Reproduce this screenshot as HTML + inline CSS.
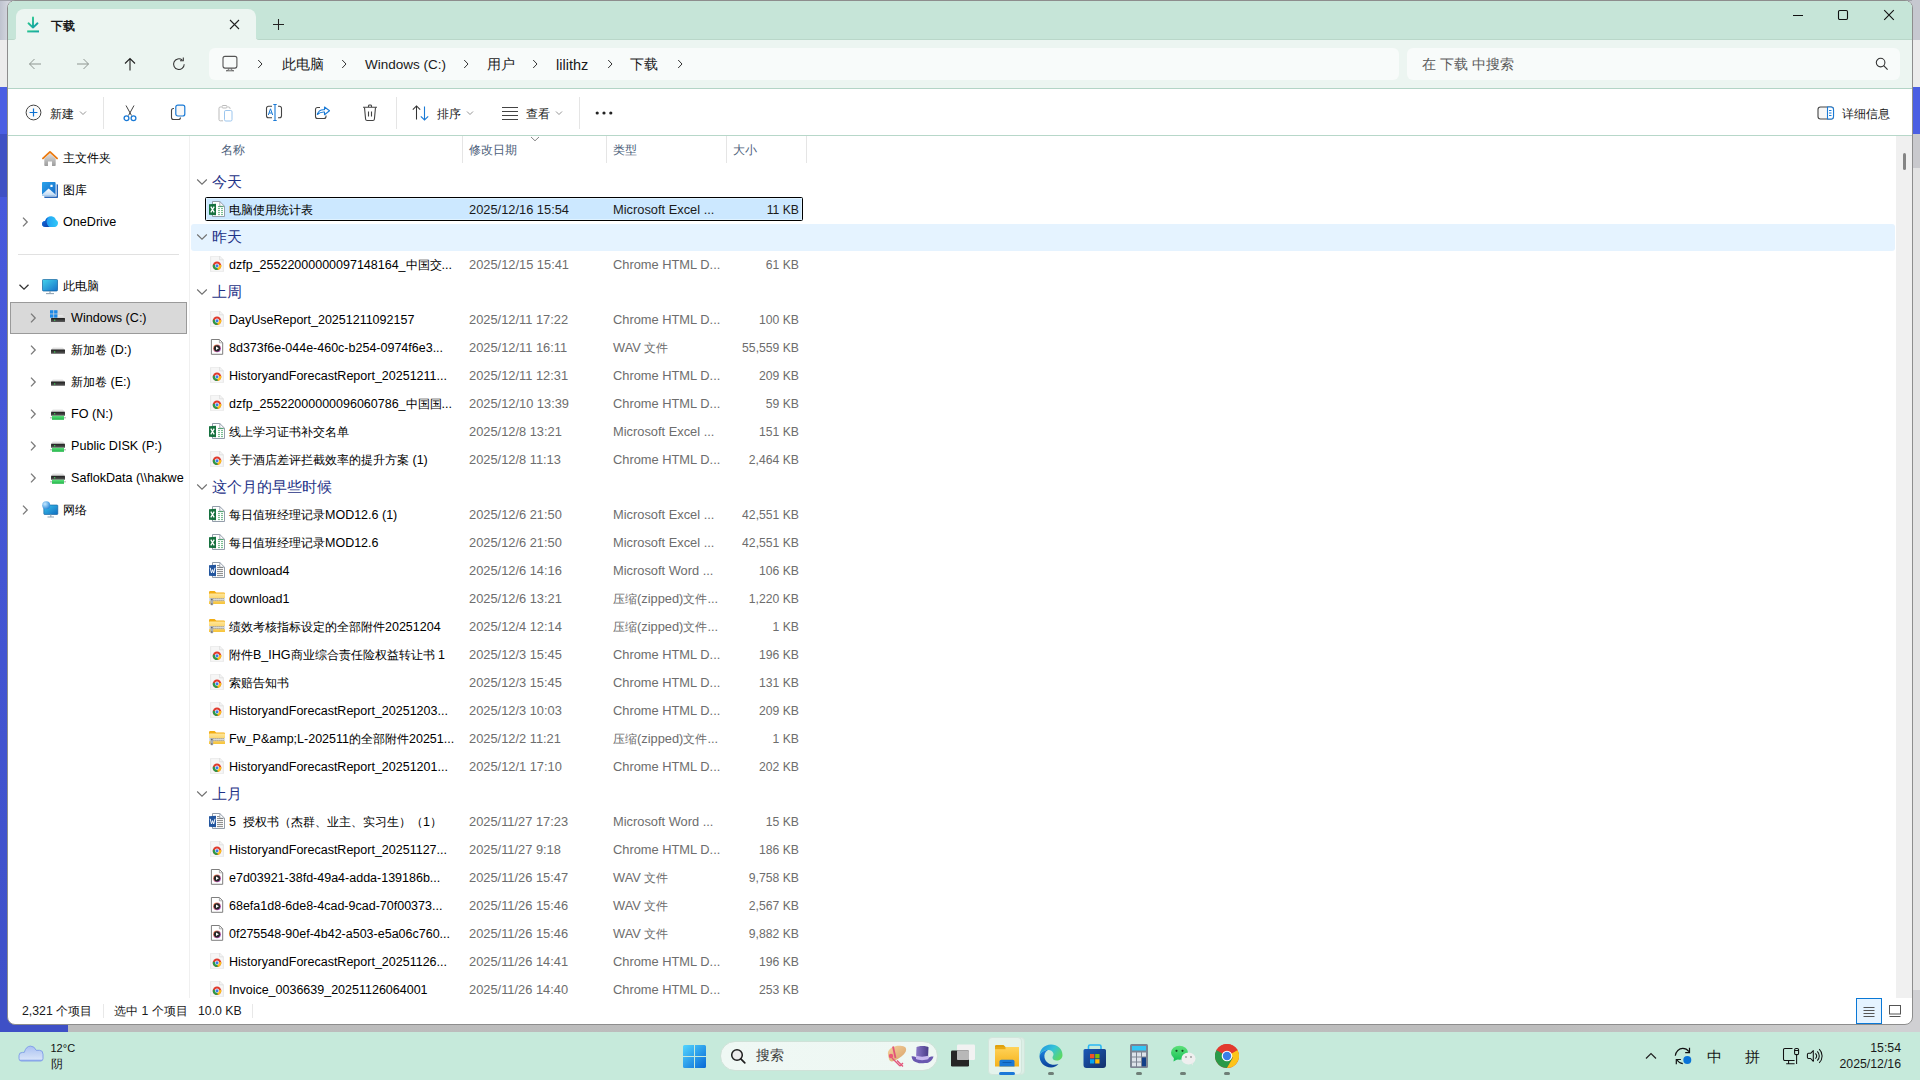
<!DOCTYPE html><html><head><meta charset="utf-8"><style>
*{margin:0;padding:0;box-sizing:border-box}
html,body{width:1920px;height:1080px;overflow:hidden;background:#4a5ad8;font-family:"Liberation Sans",sans-serif}
.t{position:absolute;white-space:pre;line-height:20px}
i{font-style:normal;line-height:0}
</style></head><body><div style="position:absolute;left:0px;top:0px;width:1920px;height:1080px;background:#e6e6e6"></div><div style="position:absolute;left:0px;top:0px;width:24px;height:40px;background:linear-gradient(90deg,#bfc3cf,#d3d6de 8px,#c9ccd6)"></div><div style="position:absolute;left:1896px;top:0px;width:24px;height:40px;background:#c6c8d0"></div><div style="position:absolute;left:0px;top:0px;width:1920px;height:1px;background:#a0a2aa"></div><div style="position:absolute;left:0px;top:40px;width:8px;height:47px;background:#ececec"></div><div style="position:absolute;left:0px;top:87px;width:8px;height:947px;background:linear-gradient(180deg,#4b5fe3 0px,#4b5fe3 47px,#3f51c4 47px,#3f51c4 110px,#4759dc 110px,#3e50c8 100%)"></div><div style="position:absolute;left:0px;top:1024px;width:68px;height:8px;background:#3e50c6"></div><div style="position:absolute;left:68px;top:1024px;width:1852px;height:8px;background:linear-gradient(90deg,#bcbcbc,#bdbdbd 80%,#d2d2d2)"></div><div style="position:absolute;left:1912px;top:0px;width:8px;height:40px;background:#c6c8d0"></div><div style="position:absolute;left:1912px;top:40px;width:8px;height:47px;background:#ececec"></div><div style="position:absolute;left:1912px;top:87px;width:8px;height:47px;background:#4b5fe3"></div><div style="position:absolute;left:1912px;top:134px;width:8px;height:34px;background:#c9c9cd"></div><div style="position:absolute;left:1912px;top:168px;width:8px;height:856px;background:#e3e3e3"></div><div style="position:absolute;left:0px;top:990px;width:24px;height:42px;background:#3e50c6"></div><div style="position:absolute;left:1896px;top:990px;width:24px;height:42px;background:#d0d0d3"></div><div style="position:absolute;left:7px;top:0px;width:1906px;height:1025px;background:#fff;border:1px solid #8d8d8d;border-radius:8px;overflow:hidden"></div><div style="position:absolute;left:8px;top:1px;width:1904px;height:87px;background:#ecf5f1;border-radius:7px 7px 0 0"></div><div style="position:absolute;left:8px;top:1px;width:1904px;height:20px;background:#c6e5d8;border-radius:7px 7px 0 0"></div><div style="position:absolute;left:8px;top:1px;width:8px;height:39px;background:#c6e5d8;border-radius:7px 0 3px 0;border-bottom:1px solid #bad8ca"></div><div style="position:absolute;left:256px;top:1px;width:1656px;height:39px;background:#c6e5d8;border-radius:0 7px 0 3px;border-bottom:1px solid #b9d7c9"></div><div style="position:absolute;left:8px;top:88px;width:1904px;height:1px;background:#b3d4c6"></div><div style="position:absolute;left:8px;top:135px;width:1904px;height:1px;background:#b7d7c9"></div><div style="position:absolute;left:16px;top:9px;width:240px;height:31px;background:#ecf5f1;border-radius:8px 8px 0 0"></div><svg style="position:absolute;left:25px;top:16px" width="16" height="18" viewBox="0 0 16 18"><defs><linearGradient id="dg" x1="0" y1="0" x2="1" y2="1"><stop offset="0" stop-color="#2fd08a"/><stop offset="1" stop-color="#0e9aa8"/></linearGradient></defs><path d="M8 1.5V11.5M3.5 7.3L8 11.6L12.5 7.3" stroke="url(#dg)" stroke-width="1.9" fill="none" stroke-linecap="round" stroke-linejoin="round"/><rect x="2.2" y="14.4" width="11.8" height="2" fill="url(#dg)"/></svg><div class="t" style="left:51px;top:15.84px;font-size:12px;color:#1a1a1a;font-weight:bold"><i style="font-size:12px">下载</i></div><svg style="position:absolute;left:229px;top:19px" width="11" height="11" viewBox="0 0 11 11"><path d="M1 1L10 10M10 1L1 10" stroke="#222" stroke-width="1.1"/></svg><svg style="position:absolute;left:273px;top:19px" width="11" height="11" viewBox="0 0 11 11"><path d="M5.5 0V11M0 5.5H11" stroke="#222" stroke-width="1.05"/></svg><div style="position:absolute;left:1793px;top:15px;width:10px;height:1px;background:#111"></div><svg style="position:absolute;left:1837px;top:9px" width="12" height="12" viewBox="0 0 12 12"><rect x="1.5" y="1.5" width="9" height="9" rx="1.2" stroke="#111" stroke-width="1.1" fill="none"/></svg><svg style="position:absolute;left:1883px;top:9px" width="12" height="12" viewBox="0 0 12 12"><path d="M1.2 1.2L10.8 10.8M10.8 1.2L1.2 10.8" stroke="#111" stroke-width="1.1"/></svg><svg style="position:absolute;left:27px;top:56px" width="16" height="16" viewBox="0 0 16 16"><path d="M14 8H2.5M7.5 3L2.5 8L7.5 13" stroke="#8d9590" stroke-width="1" fill="none"/></svg><svg style="position:absolute;left:75px;top:56px" width="16" height="16" viewBox="0 0 16 16"><path d="M2 8H13.5M8.5 3L13.5 8L8.5 13" stroke="#8d9590" stroke-width="1" fill="none"/></svg><svg style="position:absolute;left:122px;top:56px" width="16" height="16" viewBox="0 0 16 16"><path d="M8 14.5V2.5M3 7.5L8 2.5L13 7.5" stroke="#222" stroke-width="1.1" fill="none"/></svg><svg style="position:absolute;left:171px;top:56px" width="16" height="16" viewBox="0 0 16 16"><path d="M13.2 8.2A5.3 5.3 0 1 1 11.2 4" stroke="#333" stroke-width="1.05" fill="none"/><path d="M12.3 1.5V4.8H9" stroke="#333" stroke-width="1.05" fill="none"/></svg><div style="position:absolute;left:209px;top:48px;width:1190px;height:32px;background:#f8fbfa;border-radius:6px"></div><svg style="position:absolute;left:221px;top:55px" width="18" height="18" viewBox="0 0 18 18"><rect x="2" y="1.4" width="13.9" height="11.7" rx="2" stroke="#555" stroke-width="1.1" fill="none"/><path d="M7.8 13.2V14.8L5.2 15.8H12.8L10.2 14.8V13.2" stroke="#666" stroke-width="1" fill="none" stroke-linejoin="round"/></svg><svg style="position:absolute;left:256px;top:58px" width="8" height="12" viewBox="0 0 8 12"><path d="M2.2 2L6 6L2.2 10" stroke="#333" stroke-width="1.0" fill="none"/></svg><svg style="position:absolute;left:340px;top:58px" width="8" height="12" viewBox="0 0 8 12"><path d="M2.2 2L6 6L2.2 10" stroke="#333" stroke-width="1.0" fill="none"/></svg><svg style="position:absolute;left:462px;top:58px" width="8" height="12" viewBox="0 0 8 12"><path d="M2.2 2L6 6L2.2 10" stroke="#333" stroke-width="1.0" fill="none"/></svg><svg style="position:absolute;left:531px;top:58px" width="8" height="12" viewBox="0 0 8 12"><path d="M2.2 2L6 6L2.2 10" stroke="#333" stroke-width="1.0" fill="none"/></svg><svg style="position:absolute;left:606px;top:58px" width="8" height="12" viewBox="0 0 8 12"><path d="M2.2 2L6 6L2.2 10" stroke="#333" stroke-width="1.0" fill="none"/></svg><svg style="position:absolute;left:676px;top:58px" width="8" height="12" viewBox="0 0 8 12"><path d="M2.2 2L6 6L2.2 10" stroke="#333" stroke-width="1.0" fill="none"/></svg><div class="t" style="left:282px;top:55.32px;font-size:13.5px;color:#1a1a1a;"><i style="font-size:14px">此电脑</i></div><div class="t" style="left:365px;top:55.32px;font-size:13.5px;color:#1a1a1a;">Windows (C:)</div><div class="t" style="left:487px;top:55.32px;font-size:13.5px;color:#1a1a1a;"><i style="font-size:14px">用户</i></div><div class="t" style="left:556px;top:54.980000000000004px;font-size:14.5px;color:#1a1a1a;">lilithz</div><div class="t" style="left:630px;top:55.32px;font-size:13.5px;color:#1a1a1a;"><i style="font-size:14px">下载</i></div><div style="position:absolute;left:1407px;top:48px;width:493px;height:32px;background:#f8fbfa;border-radius:6px"></div><div class="t" style="left:1422px;top:55.32px;font-size:13.5px;color:#5c5c5c;"><i style="font-size:14px">在</i> <i style="font-size:14px">下载</i> <i style="font-size:14px">中搜索</i></div><svg style="position:absolute;left:1875px;top:57px" width="14" height="14" viewBox="0 0 14 14"><circle cx="5.6" cy="5.6" r="4.3" stroke="#333" stroke-width="1.1" fill="none"/><path d="M8.7 8.7L12.6 12.6" stroke="#333" stroke-width="1.2"/></svg><svg style="position:absolute;left:25px;top:104px" width="17" height="17" viewBox="0 0 17 17"><circle cx="8.5" cy="8.5" r="7.4" stroke="#444" stroke-width="1" fill="#fafafa"/><path d="M8.5 4.6V12.4M4.6 8.5H12.4" stroke="#0a6fd0" stroke-width="1.2"/></svg><div class="t" style="left:50px;top:103.84px;font-size:12px;color:#1a1a1a;"><i style="font-size:12px">新建</i></div><svg style="position:absolute;left:79px;top:110px" width="8" height="6" viewBox="0 0 8 6"><path d="M1 1.5L4 4.5L7 1.5" stroke="#888" stroke-width="0.9" fill="none"/></svg><div style="position:absolute;left:103px;top:97px;width:1px;height:32px;background:#e5e5e5"></div><svg style="position:absolute;left:121px;top:104px" width="18" height="18" viewBox="0 0 18 18"><path d="M5 1.5L10.5 11.5M13 1.5L7.5 11.5" stroke="#444" stroke-width="1" fill="none"/><circle cx="5.5" cy="14.2" r="2.4" stroke="#1a7ad6" stroke-width="1.3" fill="none"/><circle cx="12.5" cy="14.2" r="2.4" stroke="#1a7ad6" stroke-width="1.3" fill="none"/></svg><svg style="position:absolute;left:170px;top:104px" width="17" height="17" viewBox="0 0 17 17"><path d="M4 4.5H3.5A2 2 0 0 0 1.5 6.5V13.5A2 2 0 0 0 3.5 15.5H8.5A2 2 0 0 0 10.5 13.5" stroke="#444" stroke-width="1.1" fill="none"/><rect x="5.8" y="1.2" width="9" height="10.8" rx="2" stroke="#1a7ad6" stroke-width="1.2" fill="#f8f8f8"/></svg><svg style="position:absolute;left:217px;top:104px" width="18" height="18" viewBox="0 0 18 18"><path d="M4.5 3H3.2A1.3 1.3 0 0 0 2 4.3V15.5A1.3 1.3 0 0 0 3.3 16.8H6M10.5 3H11.8A1.3 1.3 0 0 1 13 4.3V5" stroke="#bbb" stroke-width="1" fill="none"/><rect x="5" y="1.5" width="5" height="2.5" rx="1" stroke="#bbb" stroke-width="1" fill="none"/><rect x="7.5" y="6.5" width="7.5" height="10.5" rx="1.3" stroke="#9cc6ee" stroke-width="1" fill="none"/></svg><svg style="position:absolute;left:265px;top:103px" width="18" height="19" viewBox="0 0 18 19"><path d="M7 3.2H3.5A2 2 0 0 0 1.5 5.2V12.8A2 2 0 0 0 3.5 14.8H7M13 3.2H14.5A2 2 0 0 1 16.5 5.2V12.8A2 2 0 0 1 14.5 14.8H13" stroke="#444" stroke-width="1.1" fill="none"/><path d="M10 1.5V17.5M8.3 1.5H11.7M8.3 17.5H11.7" stroke="#1a7ad6" stroke-width="1.1"/><path d="M3.3 12L5.5 5.8L7.7 12M4.1 10H6.9" stroke="#1a7ad6" stroke-width="1" fill="none"/></svg><svg style="position:absolute;left:314px;top:104px" width="18" height="18" viewBox="0 0 18 18"><path d="M6 3.5H3.5A2 2 0 0 0 1.5 5.5V12.5A2 2 0 0 0 3.5 14.5H10A2 2 0 0 0 12 12.5V11.5" stroke="#444" stroke-width="1.1" fill="none"/><path d="M3.3 10.5C4.5 6.5 8 5.5 10.5 5.8V3L15.5 6.8L10.5 10.7V8C8 7.8 5.5 8.6 3.3 10.5Z" stroke="#1a7ad6" stroke-width="1.1" fill="none" stroke-linejoin="round"/></svg><svg style="position:absolute;left:362px;top:104px" width="16" height="18" viewBox="0 0 16 18"><path d="M1 3.2H15M6.5 3V1.8A1 1 0 0 1 7.5 1H8.5A1 1 0 0 1 9.5 1.8V3" stroke="#444" stroke-width="1.1" fill="none"/><path d="M2.5 3.5L3.6 15.2A1.5 1.5 0 0 0 5.1 16.5H10.9A1.5 1.5 0 0 0 12.4 15.2L13.5 3.5" stroke="#444" stroke-width="1.1" fill="none"/><path d="M6.5 7.5V12.5M9.5 7.5V12.5" stroke="#444" stroke-width="1.1"/></svg><div style="position:absolute;left:396px;top:97px;width:1px;height:32px;background:#e5e5e5"></div><svg style="position:absolute;left:411px;top:104px" width="20" height="18" viewBox="0 0 20 18"><path d="M5.5 15.5V2M1.8 5.7L5.5 2L9.2 5.7" stroke="#333" stroke-width="1.05" fill="none"/><path d="M13.5 2.5V16M9.8 12.3L13.5 16L17.2 12.3" stroke="#1a7ad6" stroke-width="1.1" fill="none"/></svg><div class="t" style="left:437px;top:103.84px;font-size:12px;color:#1a1a1a;"><i style="font-size:12px">排序</i></div><svg style="position:absolute;left:466px;top:110px" width="8" height="6" viewBox="0 0 8 6"><path d="M1 1.5L4 4.5L7 1.5" stroke="#888" stroke-width="0.9" fill="none"/></svg><svg style="position:absolute;left:501px;top:105px" width="18" height="16" viewBox="0 0 18 16"><path d="M1 2.5H17M1 6.5H17M1 10.5H17M1 14.5H17" stroke="#444" stroke-width="1"/></svg><div class="t" style="left:526px;top:103.84px;font-size:12px;color:#1a1a1a;"><i style="font-size:12px">查看</i></div><svg style="position:absolute;left:555px;top:110px" width="8" height="6" viewBox="0 0 8 6"><path d="M1 1.5L4 4.5L7 1.5" stroke="#888" stroke-width="0.9" fill="none"/></svg><div style="position:absolute;left:579px;top:97px;width:1px;height:32px;background:#e5e5e5"></div><svg style="position:absolute;left:595px;top:110px" width="18" height="6" viewBox="0 0 18 6"><circle cx="2.2" cy="3" r="1.6" fill="#222"/><circle cx="9" cy="3" r="1.6" fill="#222"/><circle cx="15.8" cy="3" r="1.6" fill="#222"/></svg><svg style="position:absolute;left:1817px;top:106px" width="18" height="14" viewBox="0 0 18 14"><rect x="1" y="1" width="15.5" height="12" rx="2.5" stroke="#444" stroke-width="1.1" fill="#f7f7f7"/><path d="M10.5 1H14A2.5 2.5 0 0 1 16.5 3.5V10.5A2.5 2.5 0 0 1 14 13H10.5Z" stroke="#1a7ad6" stroke-width="1.1" fill="#fff"/><path d="M12 4.5H14.5M12 7H14.5M12 9.5H14.5" stroke="#1a7ad6" stroke-width="1"/></svg><div class="t" style="left:1842px;top:103.84px;font-size:12px;color:#1a1a1a;"><i style="font-size:12px">详细信息</i></div><svg style="position:absolute;left:42px;top:150px" width="16" height="16" viewBox="0 0 16 16"><defs><linearGradient id="hg" x1="0" y1="0" x2="0" y2="1"><stop offset="0" stop-color="#dcdcdc"/><stop offset="1" stop-color="#9c9c9c"/></linearGradient></defs><path d="M2.3 8.8L8 3.6L13.7 8.8V15.2A0.8 0.8 0 0 1 12.9 16H10V11.5H6V16H3.1A0.8 0.8 0 0 1 2.3 15.2Z" fill="url(#hg)"/><path d="M1 8.4L8 1.9L15 8.4" stroke="#ea7a10" stroke-width="1.9" fill="none" stroke-linecap="round" stroke-linejoin="round"/></svg><div class="t" style="left:63px;top:148.13px;font-size:12.6px;color:#000;"><i style="font-size:12px">主文件夹</i></div><svg style="position:absolute;left:42px;top:182px" width="16" height="16" viewBox="0 0 16 16"><defs><linearGradient id="gg" x1="0" y1="0" x2="1" y2="1"><stop offset="0" stop-color="#2aa4ec"/><stop offset="1" stop-color="#1467c4"/></linearGradient><linearGradient id="gm" x1="0" y1="0" x2="0" y2="1"><stop offset="0" stop-color="#ffffff"/><stop offset="1" stop-color="#bcd8f4"/></linearGradient></defs><path d="M14.6 2.2H15.2A0.8 0.8 0 0 1 16 3V15.2A0.8 0.8 0 0 1 15.2 16H3A0.8 0.8 0 0 1 2.2 15.2V14.6H14.6Z" fill="#2a66b8"/><rect x="0" y="0" width="13.6" height="13.6" rx="0.9" fill="url(#gg)"/><path d="M0 13.6V12.4L6.6 6.4L13.6 12.4V13.6Z" fill="url(#gm)"/><rect x="8.4" y="2.8" width="2.2" height="2.2" rx="0.3" fill="#fff"/></svg><div class="t" style="left:63px;top:180.13px;font-size:12.6px;color:#000;"><i style="font-size:12px">图库</i></div><svg style="position:absolute;left:21px;top:216px" width="8" height="12" viewBox="0 0 8 12"><path d="M2 1.6L6.2 6L2 10.4" stroke="#7a7a7a" stroke-width="1.3" fill="none"/></svg><svg style="position:absolute;left:42px;top:215px" width="16" height="13" viewBox="0 0 16 13"><defs><linearGradient id="og1" x1="0" y1="0" x2="1" y2="1"><stop offset="0" stop-color="#1a6fe0"/><stop offset="1" stop-color="#0a3fa8"/></linearGradient><linearGradient id="og2" x1="0" y1="0" x2="1" y2="0"><stop offset="0" stop-color="#1c8ff0"/><stop offset="1" stop-color="#30c8f8"/></linearGradient></defs><path d="M3.5 12C1.5 12 0 10.8 0 9C0 7.2 1.5 6 3.2 6C4 3 6.5 1 9.5 1.2C12 1.4 13.5 3 14 5C15.3 5.5 16 6.7 16 8C16 10.2 14.5 12 12.5 12Z" fill="url(#og2)"/><path d="M3.5 12C1.5 12 0 10.8 0 9C0 7.2 1.5 6 3.2 6C3.8 4 5 3 6.2 2.6C4.5 4.5 4.2 7 5.2 9.2C5.8 10.5 6.5 11.4 7.5 12Z" fill="url(#og1)"/></svg><div class="t" style="left:63px;top:212.13px;font-size:12.6px;color:#000;">OneDrive</div><div style="position:absolute;left:18px;top:254px;width:161px;height:1px;background:#e1e1e1"></div><svg style="position:absolute;left:18px;top:282.5px" width="12" height="8" viewBox="0 0 12 8"><path d="M1.5 1.8L6 6.2L10.5 1.8" stroke="#333" stroke-width="1.3" fill="none"/></svg><svg style="position:absolute;left:42px;top:279px" width="16" height="16" viewBox="0 0 16 16"><defs><linearGradient id="pg" x1="0" y1="0" x2="1" y2="1"><stop offset="0" stop-color="#42d4ec"/><stop offset="1" stop-color="#1670c8"/></linearGradient></defs><rect x="0.4" y="0.4" width="15.2" height="11.6" rx="1.2" fill="url(#pg)" stroke="#0c5a98" stroke-width="0.7"/><path d="M8 12V14.3" stroke="#90a4b4" stroke-width="1.2"/><path d="M4 14.6H12" stroke="#90a4b4" stroke-width="1.1"/></svg><div class="t" style="left:63px;top:276.13px;font-size:12.6px;color:#000;"><i style="font-size:12px">此电脑</i></div><div style="position:absolute;left:10px;top:302px;width:177px;height:32px;background:#d9d9d9;border:1px solid #9a9a9a"></div><svg style="position:absolute;left:29px;top:312px" width="8" height="12" viewBox="0 0 8 12"><path d="M2 1.6L6.2 6L2 10.4" stroke="#7a7a7a" stroke-width="1.3" fill="none"/></svg><svg style="position:absolute;left:50px;top:309px" width="16" height="16" viewBox="0 0 16 16"><defs><linearGradient id="dt" x1="0" y1="0" x2="0" y2="1"><stop offset="0" stop-color="#f2f2f2"/><stop offset="1" stop-color="#cfcfcf"/></linearGradient><linearGradient id="db" x1="0" y1="0" x2="0" y2="1"><stop offset="0" stop-color="#1e1e1e"/><stop offset="1" stop-color="#5a5a5a"/></linearGradient><linearGradient id="dgn" x1="0" y1="0" x2="0" y2="1"><stop offset="0" stop-color="#5ae07a"/><stop offset="1" stop-color="#22b448"/></linearGradient></defs><rect x="0" y="1.2" width="3.4" height="3.4" fill="#1e8ae8"/><rect x="4.1" y="1.2" width="3.4" height="3.4" fill="#1e8ae8"/><rect x="0" y="5.3" width="3.4" height="3.4" fill="#1e8ae8"/><rect x="4.1" y="5.3" width="3.4" height="3.4" fill="#1e8ae8"/><path d="M7.8 6.2H12.5L15 9H7.8Z" fill="url(#dt)"/><rect x="1" y="9" width="14" height="3.9" rx="0.5" fill="url(#db)"/><rect x="4" y="10.6" width="1.3" height="1.1" fill="#3fe05a"/></svg><div class="t" style="left:71px;top:308.13px;font-size:12.6px;color:#000;">Windows (C:)</div><svg style="position:absolute;left:29px;top:344px" width="8" height="12" viewBox="0 0 8 12"><path d="M2 1.6L6.2 6L2 10.4" stroke="#7a7a7a" stroke-width="1.3" fill="none"/></svg><svg style="position:absolute;left:50px;top:341px" width="16" height="16" viewBox="0 0 16 16"><defs><linearGradient id="dt" x1="0" y1="0" x2="0" y2="1"><stop offset="0" stop-color="#f2f2f2"/><stop offset="1" stop-color="#cfcfcf"/></linearGradient><linearGradient id="db" x1="0" y1="0" x2="0" y2="1"><stop offset="0" stop-color="#1e1e1e"/><stop offset="1" stop-color="#5a5a5a"/></linearGradient><linearGradient id="dgn" x1="0" y1="0" x2="0" y2="1"><stop offset="0" stop-color="#5ae07a"/><stop offset="1" stop-color="#22b448"/></linearGradient></defs><path d="M3 6.2H12.5L15 8.8H1Z" fill="url(#dt)"/><rect x="1" y="8.6" width="14" height="4.2" rx="0.5" fill="url(#db)"/><rect x="4" y="10.4" width="1.3" height="1.1" fill="#3fe05a"/></svg><div class="t" style="left:71px;top:340.13px;font-size:12.6px;color:#000;"><i style="font-size:12px">新加卷</i> (D:)</div><svg style="position:absolute;left:29px;top:376px" width="8" height="12" viewBox="0 0 8 12"><path d="M2 1.6L6.2 6L2 10.4" stroke="#7a7a7a" stroke-width="1.3" fill="none"/></svg><svg style="position:absolute;left:50px;top:373px" width="16" height="16" viewBox="0 0 16 16"><defs><linearGradient id="dt" x1="0" y1="0" x2="0" y2="1"><stop offset="0" stop-color="#f2f2f2"/><stop offset="1" stop-color="#cfcfcf"/></linearGradient><linearGradient id="db" x1="0" y1="0" x2="0" y2="1"><stop offset="0" stop-color="#1e1e1e"/><stop offset="1" stop-color="#5a5a5a"/></linearGradient><linearGradient id="dgn" x1="0" y1="0" x2="0" y2="1"><stop offset="0" stop-color="#5ae07a"/><stop offset="1" stop-color="#22b448"/></linearGradient></defs><path d="M3 6.2H12.5L15 8.8H1Z" fill="url(#dt)"/><rect x="1" y="8.6" width="14" height="4.2" rx="0.5" fill="url(#db)"/><rect x="4" y="10.4" width="1.3" height="1.1" fill="#3fe05a"/></svg><div class="t" style="left:71px;top:372.13px;font-size:12.6px;color:#000;"><i style="font-size:12px">新加卷</i> (E:)</div><svg style="position:absolute;left:29px;top:408px" width="8" height="12" viewBox="0 0 8 12"><path d="M2 1.6L6.2 6L2 10.4" stroke="#7a7a7a" stroke-width="1.3" fill="none"/></svg><svg style="position:absolute;left:50px;top:405px" width="16" height="16" viewBox="0 0 16 16"><defs><linearGradient id="dt" x1="0" y1="0" x2="0" y2="1"><stop offset="0" stop-color="#f2f2f2"/><stop offset="1" stop-color="#cfcfcf"/></linearGradient><linearGradient id="db" x1="0" y1="0" x2="0" y2="1"><stop offset="0" stop-color="#1e1e1e"/><stop offset="1" stop-color="#5a5a5a"/></linearGradient><linearGradient id="dgn" x1="0" y1="0" x2="0" y2="1"><stop offset="0" stop-color="#5ae07a"/><stop offset="1" stop-color="#22b448"/></linearGradient></defs><path d="M3 4.2H12.5L15 6.8H1Z" fill="url(#dt)"/><rect x="1" y="6.8" width="14" height="4" rx="0.4" fill="url(#db)"/><rect x="4" y="8.2" width="1.3" height="1.1" fill="#3fe05a"/><rect x="2" y="10.8" width="12" height="4" fill="url(#dgn)"/><path d="M0 12.8H2M14 12.8H16" stroke="#9a9a9a" stroke-width="0.8"/></svg><div class="t" style="left:71px;top:404.13px;font-size:12.6px;color:#000;">FO (N:)</div><svg style="position:absolute;left:29px;top:440px" width="8" height="12" viewBox="0 0 8 12"><path d="M2 1.6L6.2 6L2 10.4" stroke="#7a7a7a" stroke-width="1.3" fill="none"/></svg><svg style="position:absolute;left:50px;top:437px" width="16" height="16" viewBox="0 0 16 16"><defs><linearGradient id="dt" x1="0" y1="0" x2="0" y2="1"><stop offset="0" stop-color="#f2f2f2"/><stop offset="1" stop-color="#cfcfcf"/></linearGradient><linearGradient id="db" x1="0" y1="0" x2="0" y2="1"><stop offset="0" stop-color="#1e1e1e"/><stop offset="1" stop-color="#5a5a5a"/></linearGradient><linearGradient id="dgn" x1="0" y1="0" x2="0" y2="1"><stop offset="0" stop-color="#5ae07a"/><stop offset="1" stop-color="#22b448"/></linearGradient></defs><path d="M3 4.2H12.5L15 6.8H1Z" fill="url(#dt)"/><rect x="1" y="6.8" width="14" height="4" rx="0.4" fill="url(#db)"/><rect x="4" y="8.2" width="1.3" height="1.1" fill="#3fe05a"/><rect x="2" y="10.8" width="12" height="4" fill="url(#dgn)"/><path d="M0 12.8H2M14 12.8H16" stroke="#9a9a9a" stroke-width="0.8"/></svg><div class="t" style="left:71px;top:436.13px;font-size:12.6px;color:#000;">Public DISK (P:)</div><svg style="position:absolute;left:29px;top:472px" width="8" height="12" viewBox="0 0 8 12"><path d="M2 1.6L6.2 6L2 10.4" stroke="#7a7a7a" stroke-width="1.3" fill="none"/></svg><svg style="position:absolute;left:50px;top:469px" width="16" height="16" viewBox="0 0 16 16"><defs><linearGradient id="dt" x1="0" y1="0" x2="0" y2="1"><stop offset="0" stop-color="#f2f2f2"/><stop offset="1" stop-color="#cfcfcf"/></linearGradient><linearGradient id="db" x1="0" y1="0" x2="0" y2="1"><stop offset="0" stop-color="#1e1e1e"/><stop offset="1" stop-color="#5a5a5a"/></linearGradient><linearGradient id="dgn" x1="0" y1="0" x2="0" y2="1"><stop offset="0" stop-color="#5ae07a"/><stop offset="1" stop-color="#22b448"/></linearGradient></defs><path d="M3 4.2H12.5L15 6.8H1Z" fill="url(#dt)"/><rect x="1" y="6.8" width="14" height="4" rx="0.4" fill="url(#db)"/><rect x="4" y="8.2" width="1.3" height="1.1" fill="#3fe05a"/><rect x="2" y="10.8" width="12" height="4" fill="url(#dgn)"/><path d="M0 12.8H2M14 12.8H16" stroke="#9a9a9a" stroke-width="0.8"/></svg><div class="t" style="left:71px;top:468.13px;font-size:12.6px;color:#000;">SaflokData (\\hakwe</div><div style="position:absolute;left:187px;top:460px;width:3px;height:40px;background:#fff"></div><svg style="position:absolute;left:21px;top:504px" width="8" height="12" viewBox="0 0 8 12"><path d="M2 1.6L6.2 6L2 10.4" stroke="#7a7a7a" stroke-width="1.3" fill="none"/></svg><svg style="position:absolute;left:42px;top:501px" width="17" height="17" viewBox="0 0 17 17"><defs><linearGradient id="nm" x1="0" y1="0" x2="1" y2="1"><stop offset="0" stop-color="#3cc4ec"/><stop offset="1" stop-color="#0f6cc0"/></linearGradient><radialGradient id="ng" cx="0.35" cy="0.35" r="0.7"><stop offset="0" stop-color="#c4e8ff"/><stop offset="1" stop-color="#2a88d8"/></radialGradient></defs><rect x="1.8" y="4" width="14" height="9.5" rx="0.8" fill="url(#nm)" stroke="#0c5a98" stroke-width="0.6"/><path d="M8.8 13.5V15.6M5.5 16H12" stroke="#90a4b4" stroke-width="1.1"/><circle cx="4.2" cy="4.2" r="4" fill="url(#ng)"/></svg><div class="t" style="left:63px;top:500.13px;font-size:12.6px;color:#000;"><i style="font-size:12px">网络</i></div><div style="position:absolute;left:189px;top:136px;width:1px;height:862px;background:#f0f0f0"></div><div class="t" style="left:221px;top:139.84px;font-size:12px;color:#4c607a;"><i style="font-size:12px">名称</i></div><div class="t" style="left:469px;top:139.84px;font-size:12px;color:#4c607a;"><i style="font-size:12px">修改日期</i></div><div class="t" style="left:613px;top:139.84px;font-size:12px;color:#4c607a;"><i style="font-size:12px">类型</i></div><div class="t" style="left:733px;top:139.84px;font-size:12px;color:#4c607a;"><i style="font-size:12px">大小</i></div><div style="position:absolute;left:462px;top:136px;width:1px;height:27px;background:#e5e5e5"></div><div style="position:absolute;left:606px;top:136px;width:1px;height:27px;background:#e5e5e5"></div><div style="position:absolute;left:726px;top:136px;width:1px;height:27px;background:#e5e5e5"></div><div style="position:absolute;left:806px;top:136px;width:1px;height:27px;background:#e5e5e5"></div><svg style="position:absolute;left:530px;top:136px" width="10" height="6" viewBox="0 0 10 6"><path d="M1 1L5 4.8L9 1" stroke="#777" stroke-width="0.9" fill="none"/></svg><div style="position:absolute;left:1896px;top:136px;width:16px;height:862px;background:#f0f0f0"></div><div style="position:absolute;left:1903px;top:153px;width:3px;height:17px;background:#858585;border-radius:1.5px"></div><div style="position:absolute;left:190px;top:163px;width:1706px;height:835px;overflow:hidden"><div style="position:absolute;left:-190px;top:-163px;width:1920px;height:1080px"><svg style="position:absolute;left:196px;top:178px" width="12" height="8" viewBox="0 0 12 8"><path d="M1.2 1.5L6 6.2L10.8 1.5" stroke="#707070" stroke-width="1.1" fill="none"/></svg><div class="t" style="left:212px;top:172.3px;font-size:15px;color:#1e3287;"><i style="font-size:15px">今天</i></div><div style="position:absolute;left:205px;top:197px;width:598px;height:24px;background:#cce8ff;border:1px solid #000;box-shadow:inset 0 0 0 1px #dff2ff;border-radius:1.5px"></div><svg style="position:absolute;left:209px;top:201px" width="16" height="16" viewBox="0 0 16 16"><path d="M3.5 0.5H10.8L15.5 5.2V15.5H3.5Z" fill="#fff" stroke="#8e99a6" stroke-width="0.95"/><path d="M10.8 0.5V5.2H15.5" fill="none" stroke="#8e99a6" stroke-width="0.8"/><path d="M9 5.6H14.5" stroke="#3c9a5e" stroke-width="0.9"/><path d="M9 7.6H11M12 7.6H14M9 9.6H11M12 9.6H14M9 11.6H11M12 11.6H14M9 13.6H11M12 13.6H14" stroke="#5aae78" stroke-width="0.9"/><path d="M0 3.3L7 2.8V14.3L0 13.8Z" fill="#17713f"/><path d="M1.8 5.6L5.2 11.4M5.2 5.6L1.8 11.4" stroke="#fff" stroke-width="1.25"/></svg><div class="t" style="left:229px;top:199.67px;font-size:12.5px;color:#000;"><i style="font-size:12px">电脑使用统计表</i></div><div class="t" style="left:469px;top:199.55px;font-size:12.85px;color:#1a1a1a;">2025/12/16 15:54</div><div class="t" style="left:613px;top:199.55px;font-size:12.85px;color:#1a1a1a;">Microsoft Excel ...</div><div class="t" style="right:1121px;top:199.77px;font-size:12.2px;color:#1a1a1a">11 KB</div><div style="position:absolute;left:191px;top:224px;width:1704px;height:27px;background:#e5f3ff;border-radius:3px"></div><svg style="position:absolute;left:196px;top:233px" width="12" height="8" viewBox="0 0 12 8"><path d="M1.2 1.5L6 6.2L10.8 1.5" stroke="#707070" stroke-width="1.1" fill="none"/></svg><div class="t" style="left:212px;top:227.3px;font-size:15px;color:#1e3287;"><i style="font-size:15px">昨天</i></div><svg style="position:absolute;left:209px;top:256px" width="16" height="16" viewBox="0 0 16 16"><path d="M1.6 0.8A0.8 0.8 0 0 1 2.4 0H10.6L14.4 3.8V15.2A0.8 0.8 0 0 1 13.6 16H2.4A0.8 0.8 0 0 1 1.6 15.2Z" fill="#f6f6f6" stroke="#e2e2e2" stroke-width="0.8"/><path d="M10.6 0.2V3.8H14.2" fill="none" stroke="#dcdcdc" stroke-width="0.8"/><circle cx="8" cy="9.7" r="4.3" fill="#e0392c"/><path d="M8 9.7L3.9 8.6A4.3 4.3 0 0 0 8.9 14Z" fill="#2a9a48"/><path d="M8 9.7L12.2 8.7A4.3 4.3 0 0 1 8.9 14Z" fill="#fbbf1a"/><circle cx="8" cy="9.7" r="2.1" fill="#fff"/><circle cx="8" cy="9.7" r="1.55" fill="#3b7ce8"/></svg><div class="t" style="left:229px;top:254.67px;font-size:12.5px;color:#000;">dzfp_25522000000097148164_<i style="font-size:12px">中国交</i>...</div><div class="t" style="left:469px;top:254.55px;font-size:12.85px;color:#6d6d6d;">2025/12/15 15:41</div><div class="t" style="left:613px;top:254.55px;font-size:12.85px;color:#6d6d6d;">Chrome HTML D...</div><div class="t" style="right:1121px;top:254.77px;font-size:12.2px;color:#6d6d6d">61 KB</div><svg style="position:absolute;left:196px;top:288px" width="12" height="8" viewBox="0 0 12 8"><path d="M1.2 1.5L6 6.2L10.8 1.5" stroke="#707070" stroke-width="1.1" fill="none"/></svg><div class="t" style="left:212px;top:282.3px;font-size:15px;color:#1e3287;"><i style="font-size:15px">上周</i></div><svg style="position:absolute;left:209px;top:311px" width="16" height="16" viewBox="0 0 16 16"><path d="M1.6 0.8A0.8 0.8 0 0 1 2.4 0H10.6L14.4 3.8V15.2A0.8 0.8 0 0 1 13.6 16H2.4A0.8 0.8 0 0 1 1.6 15.2Z" fill="#f6f6f6" stroke="#e2e2e2" stroke-width="0.8"/><path d="M10.6 0.2V3.8H14.2" fill="none" stroke="#dcdcdc" stroke-width="0.8"/><circle cx="8" cy="9.7" r="4.3" fill="#e0392c"/><path d="M8 9.7L3.9 8.6A4.3 4.3 0 0 0 8.9 14Z" fill="#2a9a48"/><path d="M8 9.7L12.2 8.7A4.3 4.3 0 0 1 8.9 14Z" fill="#fbbf1a"/><circle cx="8" cy="9.7" r="2.1" fill="#fff"/><circle cx="8" cy="9.7" r="1.55" fill="#3b7ce8"/></svg><div class="t" style="left:229px;top:309.67px;font-size:12.5px;color:#000;">DayUseReport_20251211092157</div><div class="t" style="left:469px;top:309.55px;font-size:12.85px;color:#6d6d6d;">2025/12/11 17:22</div><div class="t" style="left:613px;top:309.55px;font-size:12.85px;color:#6d6d6d;">Chrome HTML D...</div><div class="t" style="right:1121px;top:309.77px;font-size:12.2px;color:#6d6d6d">100 KB</div><svg style="position:absolute;left:209px;top:339px" width="16" height="16" viewBox="0 0 16 16"><defs><linearGradient id="wr" x1="0" y1="0" x2="1" y2="1"><stop offset="0" stop-color="#ff8a3a"/><stop offset="1" stop-color="#9a4ad8"/></linearGradient></defs><path d="M2.4 0.5H10.4L13.7 3.8V15.3H2.4Z" fill="#fff" stroke="#777" stroke-width="0.95"/><path d="M10.4 0.5V3.8H13.7" fill="none" stroke="#999" stroke-width="0.8"/><circle cx="8" cy="9.3" r="3.9" fill="url(#wr)"/><circle cx="8" cy="9.3" r="3.1" fill="#262626"/><path d="M7 7.6V11L9.9 9.3Z" fill="#fff"/></svg><div class="t" style="left:229px;top:337.67px;font-size:12.5px;color:#000;">8d373f6e-044e-460c-b254-0974f6e3...</div><div class="t" style="left:469px;top:337.55px;font-size:12.85px;color:#6d6d6d;">2025/12/11 16:11</div><div class="t" style="left:613px;top:337.55px;font-size:12.85px;color:#6d6d6d;">WAV <i style="font-size:12px">文件</i></div><div class="t" style="right:1121px;top:337.77px;font-size:12.2px;color:#6d6d6d">55,559 KB</div><svg style="position:absolute;left:209px;top:367px" width="16" height="16" viewBox="0 0 16 16"><path d="M1.6 0.8A0.8 0.8 0 0 1 2.4 0H10.6L14.4 3.8V15.2A0.8 0.8 0 0 1 13.6 16H2.4A0.8 0.8 0 0 1 1.6 15.2Z" fill="#f6f6f6" stroke="#e2e2e2" stroke-width="0.8"/><path d="M10.6 0.2V3.8H14.2" fill="none" stroke="#dcdcdc" stroke-width="0.8"/><circle cx="8" cy="9.7" r="4.3" fill="#e0392c"/><path d="M8 9.7L3.9 8.6A4.3 4.3 0 0 0 8.9 14Z" fill="#2a9a48"/><path d="M8 9.7L12.2 8.7A4.3 4.3 0 0 1 8.9 14Z" fill="#fbbf1a"/><circle cx="8" cy="9.7" r="2.1" fill="#fff"/><circle cx="8" cy="9.7" r="1.55" fill="#3b7ce8"/></svg><div class="t" style="left:229px;top:365.67px;font-size:12.5px;color:#000;">HistoryandForecastReport_20251211...</div><div class="t" style="left:469px;top:365.55px;font-size:12.85px;color:#6d6d6d;">2025/12/11 12:31</div><div class="t" style="left:613px;top:365.55px;font-size:12.85px;color:#6d6d6d;">Chrome HTML D...</div><div class="t" style="right:1121px;top:365.77px;font-size:12.2px;color:#6d6d6d">209 KB</div><svg style="position:absolute;left:209px;top:395px" width="16" height="16" viewBox="0 0 16 16"><path d="M1.6 0.8A0.8 0.8 0 0 1 2.4 0H10.6L14.4 3.8V15.2A0.8 0.8 0 0 1 13.6 16H2.4A0.8 0.8 0 0 1 1.6 15.2Z" fill="#f6f6f6" stroke="#e2e2e2" stroke-width="0.8"/><path d="M10.6 0.2V3.8H14.2" fill="none" stroke="#dcdcdc" stroke-width="0.8"/><circle cx="8" cy="9.7" r="4.3" fill="#e0392c"/><path d="M8 9.7L3.9 8.6A4.3 4.3 0 0 0 8.9 14Z" fill="#2a9a48"/><path d="M8 9.7L12.2 8.7A4.3 4.3 0 0 1 8.9 14Z" fill="#fbbf1a"/><circle cx="8" cy="9.7" r="2.1" fill="#fff"/><circle cx="8" cy="9.7" r="1.55" fill="#3b7ce8"/></svg><div class="t" style="left:229px;top:393.67px;font-size:12.5px;color:#000;">dzfp_25522000000096060786_<i style="font-size:12px">中国国</i>...</div><div class="t" style="left:469px;top:393.55px;font-size:12.85px;color:#6d6d6d;">2025/12/10 13:39</div><div class="t" style="left:613px;top:393.55px;font-size:12.85px;color:#6d6d6d;">Chrome HTML D...</div><div class="t" style="right:1121px;top:393.77px;font-size:12.2px;color:#6d6d6d">59 KB</div><svg style="position:absolute;left:209px;top:423px" width="16" height="16" viewBox="0 0 16 16"><path d="M3.5 0.5H10.8L15.5 5.2V15.5H3.5Z" fill="#fff" stroke="#8e99a6" stroke-width="0.95"/><path d="M10.8 0.5V5.2H15.5" fill="none" stroke="#8e99a6" stroke-width="0.8"/><path d="M9 5.6H14.5" stroke="#3c9a5e" stroke-width="0.9"/><path d="M9 7.6H11M12 7.6H14M9 9.6H11M12 9.6H14M9 11.6H11M12 11.6H14M9 13.6H11M12 13.6H14" stroke="#5aae78" stroke-width="0.9"/><path d="M0 3.3L7 2.8V14.3L0 13.8Z" fill="#17713f"/><path d="M1.8 5.6L5.2 11.4M5.2 5.6L1.8 11.4" stroke="#fff" stroke-width="1.25"/></svg><div class="t" style="left:229px;top:421.67px;font-size:12.5px;color:#000;"><i style="font-size:12px">线上学习证书补交名单</i></div><div class="t" style="left:469px;top:421.55px;font-size:12.85px;color:#6d6d6d;">2025/12/8 13:21</div><div class="t" style="left:613px;top:421.55px;font-size:12.85px;color:#6d6d6d;">Microsoft Excel ...</div><div class="t" style="right:1121px;top:421.77px;font-size:12.2px;color:#6d6d6d">151 KB</div><svg style="position:absolute;left:209px;top:451px" width="16" height="16" viewBox="0 0 16 16"><path d="M1.6 0.8A0.8 0.8 0 0 1 2.4 0H10.6L14.4 3.8V15.2A0.8 0.8 0 0 1 13.6 16H2.4A0.8 0.8 0 0 1 1.6 15.2Z" fill="#f6f6f6" stroke="#e2e2e2" stroke-width="0.8"/><path d="M10.6 0.2V3.8H14.2" fill="none" stroke="#dcdcdc" stroke-width="0.8"/><circle cx="8" cy="9.7" r="4.3" fill="#e0392c"/><path d="M8 9.7L3.9 8.6A4.3 4.3 0 0 0 8.9 14Z" fill="#2a9a48"/><path d="M8 9.7L12.2 8.7A4.3 4.3 0 0 1 8.9 14Z" fill="#fbbf1a"/><circle cx="8" cy="9.7" r="2.1" fill="#fff"/><circle cx="8" cy="9.7" r="1.55" fill="#3b7ce8"/></svg><div class="t" style="left:229px;top:449.67px;font-size:12.5px;color:#000;"><i style="font-size:12px">关于酒店差评拦截效率的提升方案</i> (1)</div><div class="t" style="left:469px;top:449.55px;font-size:12.85px;color:#6d6d6d;">2025/12/8 11:13</div><div class="t" style="left:613px;top:449.55px;font-size:12.85px;color:#6d6d6d;">Chrome HTML D...</div><div class="t" style="right:1121px;top:449.77px;font-size:12.2px;color:#6d6d6d">2,464 KB</div><svg style="position:absolute;left:196px;top:483px" width="12" height="8" viewBox="0 0 12 8"><path d="M1.2 1.5L6 6.2L10.8 1.5" stroke="#707070" stroke-width="1.1" fill="none"/></svg><div class="t" style="left:212px;top:477.3px;font-size:15px;color:#1e3287;"><i style="font-size:15px">这个月的早些时候</i></div><svg style="position:absolute;left:209px;top:506px" width="16" height="16" viewBox="0 0 16 16"><path d="M3.5 0.5H10.8L15.5 5.2V15.5H3.5Z" fill="#fff" stroke="#8e99a6" stroke-width="0.95"/><path d="M10.8 0.5V5.2H15.5" fill="none" stroke="#8e99a6" stroke-width="0.8"/><path d="M9 5.6H14.5" stroke="#3c9a5e" stroke-width="0.9"/><path d="M9 7.6H11M12 7.6H14M9 9.6H11M12 9.6H14M9 11.6H11M12 11.6H14M9 13.6H11M12 13.6H14" stroke="#5aae78" stroke-width="0.9"/><path d="M0 3.3L7 2.8V14.3L0 13.8Z" fill="#17713f"/><path d="M1.8 5.6L5.2 11.4M5.2 5.6L1.8 11.4" stroke="#fff" stroke-width="1.25"/></svg><div class="t" style="left:229px;top:504.67px;font-size:12.5px;color:#000;"><i style="font-size:12px">每日值班经理记录</i>MOD12.6 (1)</div><div class="t" style="left:469px;top:504.55px;font-size:12.85px;color:#6d6d6d;">2025/12/6 21:50</div><div class="t" style="left:613px;top:504.55px;font-size:12.85px;color:#6d6d6d;">Microsoft Excel ...</div><div class="t" style="right:1121px;top:504.77px;font-size:12.2px;color:#6d6d6d">42,551 KB</div><svg style="position:absolute;left:209px;top:534px" width="16" height="16" viewBox="0 0 16 16"><path d="M3.5 0.5H10.8L15.5 5.2V15.5H3.5Z" fill="#fff" stroke="#8e99a6" stroke-width="0.95"/><path d="M10.8 0.5V5.2H15.5" fill="none" stroke="#8e99a6" stroke-width="0.8"/><path d="M9 5.6H14.5" stroke="#3c9a5e" stroke-width="0.9"/><path d="M9 7.6H11M12 7.6H14M9 9.6H11M12 9.6H14M9 11.6H11M12 11.6H14M9 13.6H11M12 13.6H14" stroke="#5aae78" stroke-width="0.9"/><path d="M0 3.3L7 2.8V14.3L0 13.8Z" fill="#17713f"/><path d="M1.8 5.6L5.2 11.4M5.2 5.6L1.8 11.4" stroke="#fff" stroke-width="1.25"/></svg><div class="t" style="left:229px;top:532.67px;font-size:12.5px;color:#000;"><i style="font-size:12px">每日值班经理记录</i>MOD12.6</div><div class="t" style="left:469px;top:532.55px;font-size:12.85px;color:#6d6d6d;">2025/12/6 21:50</div><div class="t" style="left:613px;top:532.55px;font-size:12.85px;color:#6d6d6d;">Microsoft Excel ...</div><div class="t" style="right:1121px;top:532.77px;font-size:12.2px;color:#6d6d6d">42,551 KB</div><svg style="position:absolute;left:209px;top:562px" width="16" height="16" viewBox="0 0 16 16"><path d="M3.5 0.5H10.8L15.5 5.2V15.5H3.5Z" fill="#fff" stroke="#8e99a6" stroke-width="0.95"/><path d="M10.8 0.5V5.2H15.5" fill="none" stroke="#8e99a6" stroke-width="0.8"/><path d="M8 3.6H10.5M8 5.6H14M8 7.6H14M8 9.6H14M8 11.6H14M8 13.6H14" stroke="#6f6f6f" stroke-width="0.85"/><path d="M0 3.3L7 2.8V14.3L0 13.8Z" fill="#22559e"/><path d="M1.2 5.8L2.5 11L3.6 7.6L4.7 11L6 5.8" stroke="#fff" stroke-width="0.95" fill="none"/></svg><div class="t" style="left:229px;top:560.67px;font-size:12.5px;color:#000;">download4</div><div class="t" style="left:469px;top:560.55px;font-size:12.85px;color:#6d6d6d;">2025/12/6 14:16</div><div class="t" style="left:613px;top:560.55px;font-size:12.85px;color:#6d6d6d;">Microsoft Word ...</div><div class="t" style="right:1121px;top:560.77px;font-size:12.2px;color:#6d6d6d">106 KB</div><svg style="position:absolute;left:209px;top:590px" width="16" height="16" viewBox="0 0 16 16"><defs><linearGradient id="zb" x1="0" y1="0" x2="0" y2="1"><stop offset="0" stop-color="#ffe69a"/><stop offset="1" stop-color="#f7c43a"/></linearGradient></defs><path d="M0 2.2A1.2 1.2 0 0 1 1.2 1H5.6L7.2 2.6H14.8A1.2 1.2 0 0 1 16 3.8V13A1 1 0 0 1 15 14H1A1 1 0 0 1 0 13Z" fill="#f2ad14"/><rect x="0" y="3.6" width="16" height="10.4" rx="0.8" fill="url(#zb)"/><rect x="0" y="8" width="16" height="3.2" fill="#d9dde2"/><path d="M4.5 8.6H15M4.5 10.6H15" stroke="#8a6a20" stroke-width="0.9" stroke-dasharray="0.9 1.1"/><rect x="1.4" y="8" width="2.8" height="7.2" rx="0.6" fill="#a9adb2"/><rect x="2.2" y="9" width="1.2" height="1.2" fill="#555"/><rect x="2.2" y="13.4" width="1.2" height="1.2" fill="#555"/></svg><div class="t" style="left:229px;top:588.67px;font-size:12.5px;color:#000;">download1</div><div class="t" style="left:469px;top:588.55px;font-size:12.85px;color:#6d6d6d;">2025/12/6 13:21</div><div class="t" style="left:613px;top:588.55px;font-size:12.85px;color:#6d6d6d;"><i style="font-size:12px">压缩</i>(zipped)<i style="font-size:12px">文件</i>...</div><div class="t" style="right:1121px;top:588.77px;font-size:12.2px;color:#6d6d6d">1,220 KB</div><svg style="position:absolute;left:209px;top:618px" width="16" height="16" viewBox="0 0 16 16"><defs><linearGradient id="zb" x1="0" y1="0" x2="0" y2="1"><stop offset="0" stop-color="#ffe69a"/><stop offset="1" stop-color="#f7c43a"/></linearGradient></defs><path d="M0 2.2A1.2 1.2 0 0 1 1.2 1H5.6L7.2 2.6H14.8A1.2 1.2 0 0 1 16 3.8V13A1 1 0 0 1 15 14H1A1 1 0 0 1 0 13Z" fill="#f2ad14"/><rect x="0" y="3.6" width="16" height="10.4" rx="0.8" fill="url(#zb)"/><rect x="0" y="8" width="16" height="3.2" fill="#d9dde2"/><path d="M4.5 8.6H15M4.5 10.6H15" stroke="#8a6a20" stroke-width="0.9" stroke-dasharray="0.9 1.1"/><rect x="1.4" y="8" width="2.8" height="7.2" rx="0.6" fill="#a9adb2"/><rect x="2.2" y="9" width="1.2" height="1.2" fill="#555"/><rect x="2.2" y="13.4" width="1.2" height="1.2" fill="#555"/></svg><div class="t" style="left:229px;top:616.67px;font-size:12.5px;color:#000;"><i style="font-size:12px">绩效考核指标设定的全部附件</i>20251204</div><div class="t" style="left:469px;top:616.55px;font-size:12.85px;color:#6d6d6d;">2025/12/4 12:14</div><div class="t" style="left:613px;top:616.55px;font-size:12.85px;color:#6d6d6d;"><i style="font-size:12px">压缩</i>(zipped)<i style="font-size:12px">文件</i>...</div><div class="t" style="right:1121px;top:616.77px;font-size:12.2px;color:#6d6d6d">1 KB</div><svg style="position:absolute;left:209px;top:646px" width="16" height="16" viewBox="0 0 16 16"><path d="M1.6 0.8A0.8 0.8 0 0 1 2.4 0H10.6L14.4 3.8V15.2A0.8 0.8 0 0 1 13.6 16H2.4A0.8 0.8 0 0 1 1.6 15.2Z" fill="#f6f6f6" stroke="#e2e2e2" stroke-width="0.8"/><path d="M10.6 0.2V3.8H14.2" fill="none" stroke="#dcdcdc" stroke-width="0.8"/><circle cx="8" cy="9.7" r="4.3" fill="#e0392c"/><path d="M8 9.7L3.9 8.6A4.3 4.3 0 0 0 8.9 14Z" fill="#2a9a48"/><path d="M8 9.7L12.2 8.7A4.3 4.3 0 0 1 8.9 14Z" fill="#fbbf1a"/><circle cx="8" cy="9.7" r="2.1" fill="#fff"/><circle cx="8" cy="9.7" r="1.55" fill="#3b7ce8"/></svg><div class="t" style="left:229px;top:644.67px;font-size:12.5px;color:#000;"><i style="font-size:12px">附件</i>B_IHG<i style="font-size:12px">商业综合责任险权益转让书</i> 1</div><div class="t" style="left:469px;top:644.55px;font-size:12.85px;color:#6d6d6d;">2025/12/3 15:45</div><div class="t" style="left:613px;top:644.55px;font-size:12.85px;color:#6d6d6d;">Chrome HTML D...</div><div class="t" style="right:1121px;top:644.77px;font-size:12.2px;color:#6d6d6d">196 KB</div><svg style="position:absolute;left:209px;top:674px" width="16" height="16" viewBox="0 0 16 16"><path d="M1.6 0.8A0.8 0.8 0 0 1 2.4 0H10.6L14.4 3.8V15.2A0.8 0.8 0 0 1 13.6 16H2.4A0.8 0.8 0 0 1 1.6 15.2Z" fill="#f6f6f6" stroke="#e2e2e2" stroke-width="0.8"/><path d="M10.6 0.2V3.8H14.2" fill="none" stroke="#dcdcdc" stroke-width="0.8"/><circle cx="8" cy="9.7" r="4.3" fill="#e0392c"/><path d="M8 9.7L3.9 8.6A4.3 4.3 0 0 0 8.9 14Z" fill="#2a9a48"/><path d="M8 9.7L12.2 8.7A4.3 4.3 0 0 1 8.9 14Z" fill="#fbbf1a"/><circle cx="8" cy="9.7" r="2.1" fill="#fff"/><circle cx="8" cy="9.7" r="1.55" fill="#3b7ce8"/></svg><div class="t" style="left:229px;top:672.67px;font-size:12.5px;color:#000;"><i style="font-size:12px">索赔告知书</i></div><div class="t" style="left:469px;top:672.55px;font-size:12.85px;color:#6d6d6d;">2025/12/3 15:45</div><div class="t" style="left:613px;top:672.55px;font-size:12.85px;color:#6d6d6d;">Chrome HTML D...</div><div class="t" style="right:1121px;top:672.77px;font-size:12.2px;color:#6d6d6d">131 KB</div><svg style="position:absolute;left:209px;top:702px" width="16" height="16" viewBox="0 0 16 16"><path d="M1.6 0.8A0.8 0.8 0 0 1 2.4 0H10.6L14.4 3.8V15.2A0.8 0.8 0 0 1 13.6 16H2.4A0.8 0.8 0 0 1 1.6 15.2Z" fill="#f6f6f6" stroke="#e2e2e2" stroke-width="0.8"/><path d="M10.6 0.2V3.8H14.2" fill="none" stroke="#dcdcdc" stroke-width="0.8"/><circle cx="8" cy="9.7" r="4.3" fill="#e0392c"/><path d="M8 9.7L3.9 8.6A4.3 4.3 0 0 0 8.9 14Z" fill="#2a9a48"/><path d="M8 9.7L12.2 8.7A4.3 4.3 0 0 1 8.9 14Z" fill="#fbbf1a"/><circle cx="8" cy="9.7" r="2.1" fill="#fff"/><circle cx="8" cy="9.7" r="1.55" fill="#3b7ce8"/></svg><div class="t" style="left:229px;top:700.67px;font-size:12.5px;color:#000;">HistoryandForecastReport_20251203...</div><div class="t" style="left:469px;top:700.55px;font-size:12.85px;color:#6d6d6d;">2025/12/3 10:03</div><div class="t" style="left:613px;top:700.55px;font-size:12.85px;color:#6d6d6d;">Chrome HTML D...</div><div class="t" style="right:1121px;top:700.77px;font-size:12.2px;color:#6d6d6d">209 KB</div><svg style="position:absolute;left:209px;top:730px" width="16" height="16" viewBox="0 0 16 16"><defs><linearGradient id="zb" x1="0" y1="0" x2="0" y2="1"><stop offset="0" stop-color="#ffe69a"/><stop offset="1" stop-color="#f7c43a"/></linearGradient></defs><path d="M0 2.2A1.2 1.2 0 0 1 1.2 1H5.6L7.2 2.6H14.8A1.2 1.2 0 0 1 16 3.8V13A1 1 0 0 1 15 14H1A1 1 0 0 1 0 13Z" fill="#f2ad14"/><rect x="0" y="3.6" width="16" height="10.4" rx="0.8" fill="url(#zb)"/><rect x="0" y="8" width="16" height="3.2" fill="#d9dde2"/><path d="M4.5 8.6H15M4.5 10.6H15" stroke="#8a6a20" stroke-width="0.9" stroke-dasharray="0.9 1.1"/><rect x="1.4" y="8" width="2.8" height="7.2" rx="0.6" fill="#a9adb2"/><rect x="2.2" y="9" width="1.2" height="1.2" fill="#555"/><rect x="2.2" y="13.4" width="1.2" height="1.2" fill="#555"/></svg><div class="t" style="left:229px;top:728.67px;font-size:12.5px;color:#000;">Fw_P&amp;amp;L-202511<i style="font-size:12px">的全部附件</i>20251...</div><div class="t" style="left:469px;top:728.55px;font-size:12.85px;color:#6d6d6d;">2025/12/2 11:21</div><div class="t" style="left:613px;top:728.55px;font-size:12.85px;color:#6d6d6d;"><i style="font-size:12px">压缩</i>(zipped)<i style="font-size:12px">文件</i>...</div><div class="t" style="right:1121px;top:728.77px;font-size:12.2px;color:#6d6d6d">1 KB</div><svg style="position:absolute;left:209px;top:758px" width="16" height="16" viewBox="0 0 16 16"><path d="M1.6 0.8A0.8 0.8 0 0 1 2.4 0H10.6L14.4 3.8V15.2A0.8 0.8 0 0 1 13.6 16H2.4A0.8 0.8 0 0 1 1.6 15.2Z" fill="#f6f6f6" stroke="#e2e2e2" stroke-width="0.8"/><path d="M10.6 0.2V3.8H14.2" fill="none" stroke="#dcdcdc" stroke-width="0.8"/><circle cx="8" cy="9.7" r="4.3" fill="#e0392c"/><path d="M8 9.7L3.9 8.6A4.3 4.3 0 0 0 8.9 14Z" fill="#2a9a48"/><path d="M8 9.7L12.2 8.7A4.3 4.3 0 0 1 8.9 14Z" fill="#fbbf1a"/><circle cx="8" cy="9.7" r="2.1" fill="#fff"/><circle cx="8" cy="9.7" r="1.55" fill="#3b7ce8"/></svg><div class="t" style="left:229px;top:756.67px;font-size:12.5px;color:#000;">HistoryandForecastReport_20251201...</div><div class="t" style="left:469px;top:756.55px;font-size:12.85px;color:#6d6d6d;">2025/12/1 17:10</div><div class="t" style="left:613px;top:756.55px;font-size:12.85px;color:#6d6d6d;">Chrome HTML D...</div><div class="t" style="right:1121px;top:756.77px;font-size:12.2px;color:#6d6d6d">202 KB</div><svg style="position:absolute;left:196px;top:790px" width="12" height="8" viewBox="0 0 12 8"><path d="M1.2 1.5L6 6.2L10.8 1.5" stroke="#707070" stroke-width="1.1" fill="none"/></svg><div class="t" style="left:212px;top:784.3px;font-size:15px;color:#1e3287;"><i style="font-size:15px">上月</i></div><svg style="position:absolute;left:209px;top:813px" width="16" height="16" viewBox="0 0 16 16"><path d="M3.5 0.5H10.8L15.5 5.2V15.5H3.5Z" fill="#fff" stroke="#8e99a6" stroke-width="0.95"/><path d="M10.8 0.5V5.2H15.5" fill="none" stroke="#8e99a6" stroke-width="0.8"/><path d="M8 3.6H10.5M8 5.6H14M8 7.6H14M8 9.6H14M8 11.6H14M8 13.6H14" stroke="#6f6f6f" stroke-width="0.85"/><path d="M0 3.3L7 2.8V14.3L0 13.8Z" fill="#22559e"/><path d="M1.2 5.8L2.5 11L3.6 7.6L4.7 11L6 5.8" stroke="#fff" stroke-width="0.95" fill="none"/></svg><div class="t" style="left:229px;top:811.67px;font-size:12.5px;color:#000;">5  <i style="font-size:12px">授权书（杰群、业主、实习生）（</i>1<i style="font-size:12px">）</i></div><div class="t" style="left:469px;top:811.55px;font-size:12.85px;color:#6d6d6d;">2025/11/27 17:23</div><div class="t" style="left:613px;top:811.55px;font-size:12.85px;color:#6d6d6d;">Microsoft Word ...</div><div class="t" style="right:1121px;top:811.77px;font-size:12.2px;color:#6d6d6d">15 KB</div><svg style="position:absolute;left:209px;top:841px" width="16" height="16" viewBox="0 0 16 16"><path d="M1.6 0.8A0.8 0.8 0 0 1 2.4 0H10.6L14.4 3.8V15.2A0.8 0.8 0 0 1 13.6 16H2.4A0.8 0.8 0 0 1 1.6 15.2Z" fill="#f6f6f6" stroke="#e2e2e2" stroke-width="0.8"/><path d="M10.6 0.2V3.8H14.2" fill="none" stroke="#dcdcdc" stroke-width="0.8"/><circle cx="8" cy="9.7" r="4.3" fill="#e0392c"/><path d="M8 9.7L3.9 8.6A4.3 4.3 0 0 0 8.9 14Z" fill="#2a9a48"/><path d="M8 9.7L12.2 8.7A4.3 4.3 0 0 1 8.9 14Z" fill="#fbbf1a"/><circle cx="8" cy="9.7" r="2.1" fill="#fff"/><circle cx="8" cy="9.7" r="1.55" fill="#3b7ce8"/></svg><div class="t" style="left:229px;top:839.67px;font-size:12.5px;color:#000;">HistoryandForecastReport_20251127...</div><div class="t" style="left:469px;top:839.55px;font-size:12.85px;color:#6d6d6d;">2025/11/27 9:18</div><div class="t" style="left:613px;top:839.55px;font-size:12.85px;color:#6d6d6d;">Chrome HTML D...</div><div class="t" style="right:1121px;top:839.77px;font-size:12.2px;color:#6d6d6d">186 KB</div><svg style="position:absolute;left:209px;top:869px" width="16" height="16" viewBox="0 0 16 16"><defs><linearGradient id="wr" x1="0" y1="0" x2="1" y2="1"><stop offset="0" stop-color="#ff8a3a"/><stop offset="1" stop-color="#9a4ad8"/></linearGradient></defs><path d="M2.4 0.5H10.4L13.7 3.8V15.3H2.4Z" fill="#fff" stroke="#777" stroke-width="0.95"/><path d="M10.4 0.5V3.8H13.7" fill="none" stroke="#999" stroke-width="0.8"/><circle cx="8" cy="9.3" r="3.9" fill="url(#wr)"/><circle cx="8" cy="9.3" r="3.1" fill="#262626"/><path d="M7 7.6V11L9.9 9.3Z" fill="#fff"/></svg><div class="t" style="left:229px;top:867.67px;font-size:12.5px;color:#000;">e7d03921-38fd-49a4-adda-139186b...</div><div class="t" style="left:469px;top:867.55px;font-size:12.85px;color:#6d6d6d;">2025/11/26 15:47</div><div class="t" style="left:613px;top:867.55px;font-size:12.85px;color:#6d6d6d;">WAV <i style="font-size:12px">文件</i></div><div class="t" style="right:1121px;top:867.77px;font-size:12.2px;color:#6d6d6d">9,758 KB</div><svg style="position:absolute;left:209px;top:897px" width="16" height="16" viewBox="0 0 16 16"><defs><linearGradient id="wr" x1="0" y1="0" x2="1" y2="1"><stop offset="0" stop-color="#ff8a3a"/><stop offset="1" stop-color="#9a4ad8"/></linearGradient></defs><path d="M2.4 0.5H10.4L13.7 3.8V15.3H2.4Z" fill="#fff" stroke="#777" stroke-width="0.95"/><path d="M10.4 0.5V3.8H13.7" fill="none" stroke="#999" stroke-width="0.8"/><circle cx="8" cy="9.3" r="3.9" fill="url(#wr)"/><circle cx="8" cy="9.3" r="3.1" fill="#262626"/><path d="M7 7.6V11L9.9 9.3Z" fill="#fff"/></svg><div class="t" style="left:229px;top:895.67px;font-size:12.5px;color:#000;">68efa1d8-6de8-4cad-9cad-70f00373...</div><div class="t" style="left:469px;top:895.55px;font-size:12.85px;color:#6d6d6d;">2025/11/26 15:46</div><div class="t" style="left:613px;top:895.55px;font-size:12.85px;color:#6d6d6d;">WAV <i style="font-size:12px">文件</i></div><div class="t" style="right:1121px;top:895.77px;font-size:12.2px;color:#6d6d6d">2,567 KB</div><svg style="position:absolute;left:209px;top:925px" width="16" height="16" viewBox="0 0 16 16"><defs><linearGradient id="wr" x1="0" y1="0" x2="1" y2="1"><stop offset="0" stop-color="#ff8a3a"/><stop offset="1" stop-color="#9a4ad8"/></linearGradient></defs><path d="M2.4 0.5H10.4L13.7 3.8V15.3H2.4Z" fill="#fff" stroke="#777" stroke-width="0.95"/><path d="M10.4 0.5V3.8H13.7" fill="none" stroke="#999" stroke-width="0.8"/><circle cx="8" cy="9.3" r="3.9" fill="url(#wr)"/><circle cx="8" cy="9.3" r="3.1" fill="#262626"/><path d="M7 7.6V11L9.9 9.3Z" fill="#fff"/></svg><div class="t" style="left:229px;top:923.67px;font-size:12.5px;color:#000;">0f275548-90ef-4b42-a503-e5a06c760...</div><div class="t" style="left:469px;top:923.55px;font-size:12.85px;color:#6d6d6d;">2025/11/26 15:46</div><div class="t" style="left:613px;top:923.55px;font-size:12.85px;color:#6d6d6d;">WAV <i style="font-size:12px">文件</i></div><div class="t" style="right:1121px;top:923.77px;font-size:12.2px;color:#6d6d6d">9,882 KB</div><svg style="position:absolute;left:209px;top:953px" width="16" height="16" viewBox="0 0 16 16"><path d="M1.6 0.8A0.8 0.8 0 0 1 2.4 0H10.6L14.4 3.8V15.2A0.8 0.8 0 0 1 13.6 16H2.4A0.8 0.8 0 0 1 1.6 15.2Z" fill="#f6f6f6" stroke="#e2e2e2" stroke-width="0.8"/><path d="M10.6 0.2V3.8H14.2" fill="none" stroke="#dcdcdc" stroke-width="0.8"/><circle cx="8" cy="9.7" r="4.3" fill="#e0392c"/><path d="M8 9.7L3.9 8.6A4.3 4.3 0 0 0 8.9 14Z" fill="#2a9a48"/><path d="M8 9.7L12.2 8.7A4.3 4.3 0 0 1 8.9 14Z" fill="#fbbf1a"/><circle cx="8" cy="9.7" r="2.1" fill="#fff"/><circle cx="8" cy="9.7" r="1.55" fill="#3b7ce8"/></svg><div class="t" style="left:229px;top:951.67px;font-size:12.5px;color:#000;">HistoryandForecastReport_20251126...</div><div class="t" style="left:469px;top:951.55px;font-size:12.85px;color:#6d6d6d;">2025/11/26 14:41</div><div class="t" style="left:613px;top:951.55px;font-size:12.85px;color:#6d6d6d;">Chrome HTML D...</div><div class="t" style="right:1121px;top:951.77px;font-size:12.2px;color:#6d6d6d">196 KB</div><svg style="position:absolute;left:209px;top:981px" width="16" height="16" viewBox="0 0 16 16"><path d="M1.6 0.8A0.8 0.8 0 0 1 2.4 0H10.6L14.4 3.8V15.2A0.8 0.8 0 0 1 13.6 16H2.4A0.8 0.8 0 0 1 1.6 15.2Z" fill="#f6f6f6" stroke="#e2e2e2" stroke-width="0.8"/><path d="M10.6 0.2V3.8H14.2" fill="none" stroke="#dcdcdc" stroke-width="0.8"/><circle cx="8" cy="9.7" r="4.3" fill="#e0392c"/><path d="M8 9.7L3.9 8.6A4.3 4.3 0 0 0 8.9 14Z" fill="#2a9a48"/><path d="M8 9.7L12.2 8.7A4.3 4.3 0 0 1 8.9 14Z" fill="#fbbf1a"/><circle cx="8" cy="9.7" r="2.1" fill="#fff"/><circle cx="8" cy="9.7" r="1.55" fill="#3b7ce8"/></svg><div class="t" style="left:229px;top:979.67px;font-size:12.5px;color:#000;">Invoice_0036639_20251126064001</div><div class="t" style="left:469px;top:979.55px;font-size:12.85px;color:#6d6d6d;">2025/11/26 14:40</div><div class="t" style="left:613px;top:979.55px;font-size:12.85px;color:#6d6d6d;">Chrome HTML D...</div><div class="t" style="right:1121px;top:979.77px;font-size:12.2px;color:#6d6d6d">253 KB</div></div></div><div class="t" style="left:22px;top:1000.74px;font-size:12.3px;color:#1a1a1a;">2,321 <i style="font-size:12px">个项目</i></div><div style="position:absolute;left:103px;top:1004px;width:1px;height:14px;background:#e8e8e8"></div><div class="t" style="left:114px;top:1000.74px;font-size:12.3px;color:#1a1a1a;"><i style="font-size:12px">选中</i> 1 <i style="font-size:12px">个项目</i></div><div class="t" style="left:198px;top:1000.74px;font-size:12.3px;color:#1a1a1a;">10.0 KB</div><div style="position:absolute;left:252px;top:1004px;width:1px;height:14px;background:#e8e8e8"></div><div style="position:absolute;left:1856px;top:998px;width:26px;height:26px;background:#e5f3ff;border:1px solid #0a78d6"></div><svg style="position:absolute;left:1862px;top:1005px" width="14" height="14" viewBox="0 0 14 14"><path d="M1.5 2.5H12.5M1.5 5.5H12.5M1.5 8.5H12.5M1.5 11.5H12.5" stroke="#555" stroke-width="1"/></svg><svg style="position:absolute;left:1888px;top:1004px" width="14" height="14" viewBox="0 0 14 14"><rect x="1.5" y="1.5" width="11" height="8.5" stroke="#555" stroke-width="1" fill="none"/><path d="M1.5 12.5H12.5" stroke="#555" stroke-width="1"/></svg><div style="position:absolute;left:0px;top:1032px;width:1920px;height:48px;background:#c6eadb"></div><svg style="position:absolute;left:14px;top:1040px" width="34" height="26" viewBox="0 0 34 26"><defs><linearGradient id="wc" x1="0" y1="0" x2="0" y2="1"><stop offset="0" stop-color="#a9c0f2"/><stop offset="0.6" stop-color="#c8d8f6"/><stop offset="1" stop-color="#dde8fb"/></linearGradient></defs><path d="M7.3 21Q5 21 5 18.5V15.5Q5 12.4 8.4 12.4H10.3Q12 6.1 16.6 6.1Q20.3 6.1 22.2 10.3H25.6Q29 10.3 29 14.3V18.5Q29 21 26.8 21Z" fill="url(#wc)" stroke="#7d9ce8" stroke-width="0.9"/><path d="M6 20.3H28" stroke="#86a4ea" stroke-width="1.2"/></svg><div class="t" style="left:50.5px;top:1038.19px;font-size:11px;color:#111;">12°C</div><div class="t" style="left:50.5px;top:1053.69px;font-size:11px;color:#222;"><i style="font-size:12px">阴</i></div><svg style="position:absolute;left:683px;top:1045px" width="23" height="23" viewBox="0 0 23 23"><defs><linearGradient id="ws" x1="0" y1="0" x2="1" y2="1"><stop offset="0" stop-color="#52d6ff"/><stop offset="1" stop-color="#0868d6"/></linearGradient></defs><path d="M0 1.5A1.5 1.5 0 0 1 1.5 0H11V11H0ZM12 0H21.5A1.5 1.5 0 0 1 23 1.5V11H12ZM0 12H11V23H1.5A1.5 1.5 0 0 1 0 21.5ZM12 12H23V21.5A1.5 1.5 0 0 1 21.5 23H12Z" fill="url(#ws)"/></svg><div style="position:absolute;left:720px;top:1041px;width:218px;height:30px;background:linear-gradient(90deg,#eff8f4,#eef7f3);border:1px solid #cfe2d8;border-radius:15px"></div><svg style="position:absolute;left:730px;top:1048px" width="17" height="17" viewBox="0 0 17 17"><circle cx="7" cy="7" r="5.3" stroke="#1e1e1e" stroke-width="1.5" fill="#ececec"/><path d="M10.8 10.8L14.8 14.8" stroke="#1e1e1e" stroke-width="1.7" stroke-linecap="round"/></svg><div class="t" style="left:756px;top:1046.32px;font-size:13.5px;color:#3f3f3f;"><i style="font-size:14px">搜索</i></div><svg style="position:absolute;left:886px;top:1044px" width="25" height="25" viewBox="0 0 25 25"><defs><linearGradient id="bn" x1="0" y1="0" x2="1" y2="1"><stop offset="0" stop-color="#f5d3a0"/><stop offset="1" stop-color="#d8a066"/></linearGradient></defs><path d="M2 8C4 3 10 1 16 2C20 2.5 21 5 19.5 8C18 11 14 14 8 17C5 18 3.5 17 3 15C2.5 12.5 1.5 10 2 8Z" fill="url(#bn)"/><path d="M7 2.5L9.5 14" stroke="#e2557a" stroke-width="1.8"/><circle cx="5" cy="12" r="2.2" fill="#ea5878"/><path d="M6 14L14 22M11 16.5L17 22.5M14 22L17 19" stroke="#e2557a" stroke-width="1.3" fill="none"/></svg><svg style="position:absolute;left:911px;top:1045px" width="23" height="20" viewBox="0 0 23 20"><defs><linearGradient id="th" x1="0" y1="0" x2="1" y2="0"><stop offset="0" stop-color="#8a78c8"/><stop offset="1" stop-color="#4a3c88"/></linearGradient></defs><path d="M5 13L5.5 2.5C6 0.5 17 0.5 17.5 2.5L17 13Z" fill="url(#th)"/><path d="M0.5 11.5C3 11 5 12 5.5 13H17C18 12 20 11.3 22.5 11.5C21.5 15 18.5 18.5 14 18C11 18.5 8 18.5 6 17.5C3 17 1 15 0.5 11.5Z" fill="#6a58b0"/><path d="M5 10.5C8 12 14 12 17.5 10.5V14C14 15.5 8 15.5 5 14Z" fill="#c8b8f0"/></svg><svg style="position:absolute;left:950px;top:1044px" width="26" height="24" viewBox="0 0 26 24"><rect x="7" y="0.5" width="18" height="15.5" rx="1.3" fill="#f2f2f2"/><rect x="1" y="6.5" width="18" height="16" rx="1.3" fill="#252525"/><rect x="7" y="6.5" width="12" height="9.5" rx="0.8" fill="#b8b8b8"/></svg><div style="position:absolute;left:1020px;top:1037px;width:5px;height:38px;background:#dcefe6;border-radius:0 4px 4px 0;border:1px solid #d2e6dc"></div><div style="position:absolute;left:988px;top:1037px;width:34px;height:38px;background:#e4f3ec;border-radius:4px;border:1px solid #d2e6dc"></div><svg style="position:absolute;left:995px;top:1045px" width="24" height="22" viewBox="0 0 24 22"><defs><linearGradient id="fb" x1="0" y1="0" x2="0" y2="1"><stop offset="0" stop-color="#ffd35a"/><stop offset="1" stop-color="#f5b21a"/></linearGradient></defs><path d="M0 1.2A1.2 1.2 0 0 1 1.2 0H8.5L10.5 2H0Z" fill="#e0a10e"/><rect x="0" y="2" width="24" height="19.5" fill="url(#fb)"/><rect x="0" y="2" width="10.5" height="2.2" fill="#e8aa14"/><path d="M4.5 21.5V16.5A1.8 1.8 0 0 1 6.3 14.7H17.7A1.8 1.8 0 0 1 19.5 16.5V21.5Z" fill="#1a78d6"/><rect x="7.5" y="17" width="9" height="1" fill="#0d5cb0"/></svg><div style="position:absolute;left:999px;top:1072px;width:16px;height:3px;background:#1a78d8;border-radius:1.5px"></div><svg style="position:absolute;left:1039px;top:1044px" width="24" height="24" viewBox="0 0 24 24"><defs><linearGradient id="eg1" x1="0" y1="0" x2="1" y2="0.6"><stop offset="0" stop-color="#1c8fe0"/><stop offset="0.55" stop-color="#36c3d8"/><stop offset="1" stop-color="#5ad868"/></linearGradient><linearGradient id="eg2" x1="0" y1="0" x2="0" y2="1"><stop offset="0" stop-color="#1a84e0"/><stop offset="1" stop-color="#0c3f98"/></linearGradient></defs><path d="M12 0.5C18.5 0.5 23.5 5 23.5 11C23.5 14.5 21 16.5 17.5 16.5C15 16.5 13.5 15.2 13.5 13.5C13.5 12.5 14.5 11.8 14.5 10.3C14.5 7.5 11.5 6 9 6C5 6 1.5 8.5 0.5 12C0.5 5.5 5.5 0.5 12 0.5Z" fill="url(#eg1)"/><path d="M0.5 12C1.5 8.5 5 6 9 6C6 7.5 5 10.5 5.5 13.5C6.5 19 13 22.5 19.5 20C17.5 22.3 15 23.5 12 23.5C5.5 23.5 0.5 18.5 0.5 12Z" fill="url(#eg2)"/></svg><div style="position:absolute;left:1048px;top:1072px;width:6px;height:3px;background:#6f7f77;border-radius:1.5px"></div><svg style="position:absolute;left:1083px;top:1044px" width="24" height="25" viewBox="0 0 24 25"><defs><linearGradient id="sg" x1="0" y1="0" x2="1" y2="1"><stop offset="0" stop-color="#1a5ab8"/><stop offset="1" stop-color="#14306a"/></linearGradient></defs><path d="M5.5 6V2.5A1.5 1.5 0 0 1 7 1H16.5A1.5 1.5 0 0 1 18 2.5V6" stroke="#2ab8f5" stroke-width="1.6" fill="none"/><path d="M0.5 6.5A1.5 1.5 0 0 1 2 5H21.5A1.5 1.5 0 0 1 23 6.5V21A3 3 0 0 1 20 24H3.5A3 3 0 0 1 0.5 21Z" fill="url(#sg)"/><rect x="7" y="10" width="4.3" height="4.3" fill="#f35325"/><rect x="12.2" y="10" width="4.3" height="4.3" fill="#81bc06"/><rect x="7" y="15.2" width="4.3" height="4.3" fill="#05a6f0"/><rect x="12.2" y="15.2" width="4.3" height="4.3" fill="#ffba08"/></svg><svg style="position:absolute;left:1130px;top:1044px" width="18" height="24" viewBox="0 0 18 24"><rect x="0" y="0" width="18" height="24" rx="1.5" fill="#7c8492"/><rect x="2" y="2" width="14" height="4.5" fill="#34c6f4"/><g fill="#dde3ea"><rect x="2" y="8.5" width="4" height="4"/><rect x="7" y="8.5" width="4" height="4"/><rect x="12" y="8.5" width="4" height="4"/><rect x="2" y="13.5" width="4" height="4"/><rect x="7" y="13.5" width="4" height="4"/><rect x="2" y="18.5" width="4" height="3.8"/><rect x="7" y="18.5" width="4" height="3.8"/></g><rect x="12" y="13.5" width="4" height="8.8" fill="#123f88"/></svg><div style="position:absolute;left:1136px;top:1072px;width:6px;height:3px;background:#6f7f77;border-radius:1.5px"></div><svg style="position:absolute;left:1170px;top:1045px" width="26" height="21" viewBox="0 0 26 21"><defs><linearGradient id="wg" x1="0" y1="0" x2="0" y2="1"><stop offset="0" stop-color="#5ee07a"/><stop offset="1" stop-color="#1ec45a"/></linearGradient></defs><ellipse cx="9.5" cy="7.8" rx="8.5" ry="7" fill="url(#wg)"/><path d="M4 12.5L3.5 16.5L8 14Z" fill="#1ec45a"/><ellipse cx="18.5" cy="13.5" rx="7" ry="6" fill="#efefef"/><path d="M21 18.5L23 20.5L22.8 17.5Z" fill="#e8e8e8"/><circle cx="6.5" cy="5.8" r="1.1" fill="#134d22"/><circle cx="12.5" cy="5.8" r="1.1" fill="#134d22"/><circle cx="16" cy="12" r="0.9" fill="#999"/><circle cx="21" cy="12" r="0.9" fill="#999"/></svg><div style="position:absolute;left:1180px;top:1072px;width:6px;height:3px;background:#6f7f77;border-radius:1.5px"></div><svg style="position:absolute;left:1215px;top:1044px" width="24" height="24" viewBox="0 0 24 24"><circle cx="12" cy="12" r="12" fill="#e23a2e"/><path d="M12 12L1.6 6A12 12 0 0 0 12 24L18 13.5Z" fill="#2a9a48"/><path d="M12 12L22.4 6A12 12 0 0 1 12 24L18 13.5Z" fill="#fcc419"/><path d="M12 12L1.6 6A12 12 0 0 1 22.4 6Z" fill="#e23a2e"/><circle cx="12" cy="12" r="5.3" fill="#fff"/><circle cx="12" cy="12" r="4.2" fill="#3a7ee8"/></svg><div style="position:absolute;left:1224px;top:1072px;width:6px;height:3px;background:#6f7f77;border-radius:1.5px"></div><svg style="position:absolute;left:1645px;top:1051px" width="12" height="9" viewBox="0 0 12 9"><path d="M1 7.5L6 2.5L11 7.5" stroke="#222" stroke-width="1.2" fill="none"/></svg><svg style="position:absolute;left:1670px;top:1044px" width="26" height="24" viewBox="0 0 26 24"><path d="M5.3 11.8C5.8 7.5 9 4.4 12.8 4.4C15.2 4.4 17.4 5.6 19 7.6" stroke="#111" stroke-width="1.15" fill="none"/><path d="M19.5 3.8V8.6H15.2" stroke="#111" stroke-width="1.2" fill="none"/><path d="M7 16C8.5 18.2 10.5 19.4 12.8 19.6" stroke="#111" stroke-width="1.15" fill="none"/><path d="M10.9 15.5H6.3V20.2" stroke="#111" stroke-width="1.2" fill="none"/><circle cx="17.3" cy="16" r="4" fill="#0a74d8"/></svg><div class="t" style="left:1707px;top:1047.15px;font-size:14px;color:#1a1a1a;"><i style="font-size:15px">中</i></div><div class="t" style="left:1745px;top:1047.15px;font-size:14px;color:#1a1a1a;"><i style="font-size:15px">拼</i></div><svg style="position:absolute;left:1778px;top:1044px" width="50" height="24" viewBox="0 0 50 24"><path d="M14.5 4.4H6.8A1.3 1.3 0 0 0 5.5 5.7V15.1A1.3 1.3 0 0 0 6.8 16.4H16.6M10.6 16.4V19.6M8.2 19.7H16.6" stroke="#111" stroke-width="1.05" fill="none"/><rect x="16.6" y="4.4" width="4" height="6.2" rx="1.4" stroke="#111" stroke-width="1.05" fill="none"/><path d="M16.6 6.4H20.6M18.6 10.6V19.9" stroke="#111" stroke-width="1.05" fill="none"/><path d="M32.6 9.3H30.6A1.2 1.2 0 0 0 29.4 10.5V13.3A1.2 1.2 0 0 0 30.6 14.5H32.6L35.3 17.3V6.6Z" stroke="#111" stroke-width="1.05" fill="none" stroke-linejoin="round"/><path d="M37.4 9.3A3.8 3.8 0 0 1 37.4 14.6M39.3 7.3A6.6 6.6 0 0 1 39.3 16.7M41.2 5.2A9.4 9.4 0 0 1 41.2 18.8" stroke="#111" stroke-width="1.05" fill="none"/></svg><div class="t" style="right:19px;top:1037.74px;font-size:12.3px;color:#1a1a1a">15:54</div><div class="t" style="right:19px;top:1053.74px;font-size:12.3px;color:#1a1a1a">2025/12/16</div></body></html>
